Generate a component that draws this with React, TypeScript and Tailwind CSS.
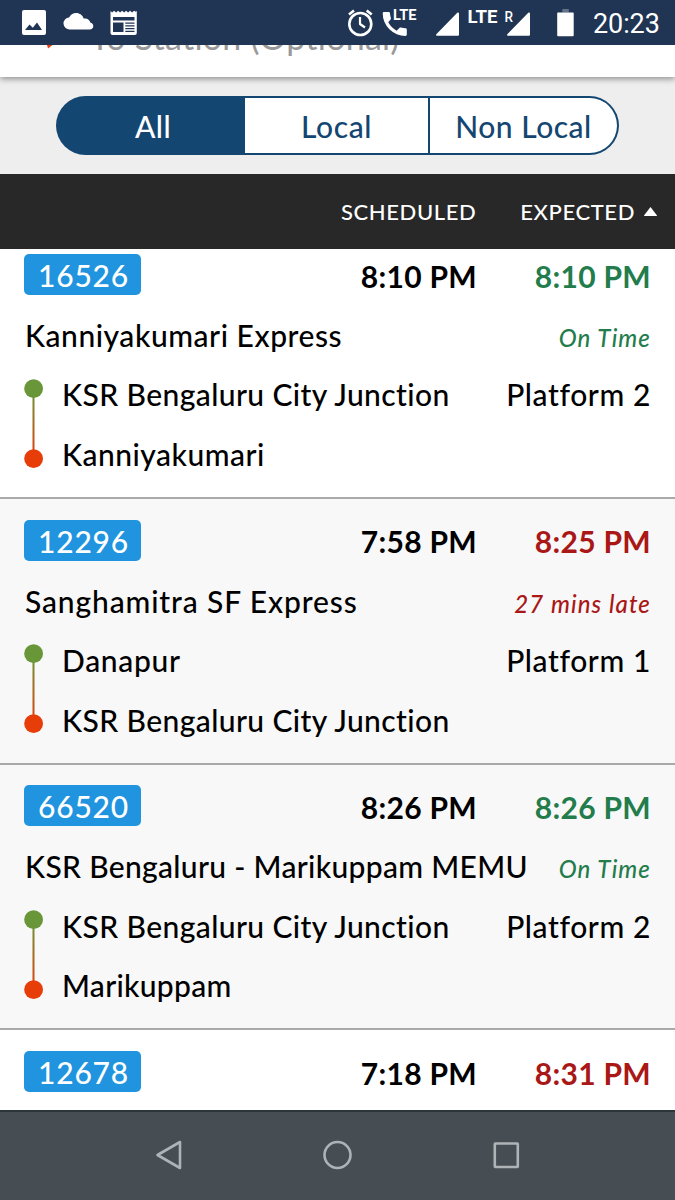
type Train = {
  number: string;
  name: string;
  nameTracking: string;
  scheduled: string;
  expected: string;
  status: string;
  late: boolean;
  from: string;
  fromTracking: string;
  to: string;
  toTracking: string;
  platform: string;
  shade: string;
};

const trains: Train[] = [
  {
    number: "16526",
    name: "Kanniyakumari Express",
    nameTracking: "tracking-[0.55px]",
    scheduled: "8:10 PM",
    expected: "8:10 PM",
    status: "On Time",
    late: false,
    from: "KSR Bengaluru City Junction",
    fromTracking: "tracking-[0.41px]",
    to: "Kanniyakumari",
    toTracking: "tracking-[0.5px]",
    platform: "Platform 2",
    shade: "bg-white",
  },
  {
    number: "12296",
    name: "Sanghamitra SF Express",
    nameTracking: "tracking-[0.87px]",
    scheduled: "7:58 PM",
    expected: "8:25 PM",
    status: "27 mins late",
    late: true,
    from: "Danapur",
    fromTracking: "tracking-[0.7px]",
    to: "KSR Bengaluru City Junction",
    toTracking: "tracking-[0.41px]",
    platform: "Platform 1",
    shade: "bg-[#f8f8f8]",
  },
  {
    number: "66520",
    name: "KSR Bengaluru - Marikuppam MEMU",
    nameTracking: "tracking-[0.32px]",
    scheduled: "8:26 PM",
    expected: "8:26 PM",
    status: "On Time",
    late: false,
    from: "KSR Bengaluru City Junction",
    fromTracking: "tracking-[0.41px]",
    to: "Marikuppam",
    toTracking: "tracking-[0.3px]",
    platform: "Platform 2",
    shade: "bg-[#f8f8f8]",
  },
  {
    number: "12678",
    name: "",
    nameTracking: "",
    scheduled: "7:18 PM",
    expected: "8:31 PM",
    status: "",
    late: true,
    from: "",
    fromTracking: "",
    to: "",
    toTracking: "",
    platform: "",
    shade: "bg-white",
  },
];

function StatusBar() {
  return (
    <div className="relative z-10 flex h-[45px] shrink-0 items-start bg-[#203453] font-['Roboto',sans-serif] text-white">
      <svg className="h-[45px] w-[150px]" viewBox="0 0 150 45" fill="currentColor">
        <path fillRule="evenodd" d="M24 10h20a2 2 0 0 1 2 2v21a2 2 0 0 1-2 2H24a2 2 0 0 1-2-2V12a2 2 0 0 1 2-2Zm1 20h17l-5-7.5-4.2 5.2-3.3-3.2Z" />
        <path d="M70 29.5a6 6 0 0 1-.9-12C70.200 14.800 73 13 76.200 13c3.600 0 6.600 2.400 7.500 5.600 3.300-.9 6 1.200 6.600 4 1.700.5 3 1.800 3 3.500 0 2-1.500 3.400-3.600 3.400Z" />
        <path fillRule="evenodd" d="M110.500 11l1.600 1.500 2-1.800 2 1.800 2-1.800 2 1.800 2-1.800 2 1.800 2-1.800 2 1.800 2-1.800 2 1.800 2-1.800 1.600 1 1.100-.7V33a2 2 0 0 1-2 2h-22.300a2 2 0 0 1-2-2Zm2.500 6v3.600h21.500V17Zm0 5.600V32h10.500v-9.400Zm12.300 0v1.200h9.200v-1.200Zm0 2.700v1.200h9.200v-1.200Zm0 2.700v1.200h9.200V28Zm0 2.700V32h9.200v-1.300Z" />
      </svg>
      <svg className="ml-auto h-[45px] w-[245px]" viewBox="340 0 245 45" fill="currentColor">
        <g fill="none" stroke="currentColor" strokeLinejoin="round">
          <circle cx="360.300" cy="24" r="11" strokeWidth="2.600" />
          <path d="M360 17v7l5 3.500" strokeWidth="2.200" />
          <path d="M349 14.500l5-4M371.700 14.500l-5-4" strokeWidth="2.600" />
        </g>
        <path d="M384 12h4.700a1.300 1.300 0 0 1 1.300 1.200c.1 1.700.4 3.300.9 4.800.1.500 0 1-.3 1.400l-2.300 2.900a20 20 0 0 0 8.400 8.400l2.900-2.900c.4-.4.900-.5 1.400-.3 1.500.5 3.100.8 4.600.8.700 0 1.200.6 1.200 1.300v5a1.300 1.300 0 0 1-1.300 1.300A22.700 22.700 0 0 1 382.700 13.300 1.300 1.300 0 0 1 384 12Z" />
        <text x="393" y="20" fontSize="14" fontWeight="700" textLength="23.500" lengthAdjust="spacingAndGlyphs">LTE</text>
        <path d="M457.500 12.500a1.300 1.300 0 0 1 1.500 1.300v21a1 1 0 0 1-1 1h-21a1 1 0 0 1-.7-1.600Z" />
        <text x="467.500" y="23" fontSize="18" fontWeight="700" textLength="30" lengthAdjust="spacingAndGlyphs">LTE</text>
        <text x="504.500" y="22.300" fontSize="14" fontWeight="500" textLength="8.500" lengthAdjust="spacingAndGlyphs">R</text>
        <path d="M528.500 12.500a1.300 1.300 0 0 1 1.500 1.300v21a1 1 0 0 1-1 1h-21a1 1 0 0 1-.7-1.600Z" />
        <path d="M562.300 9h6.500v3.500h-6.500z" fill="#66748a" />
        <path d="M558 12.500h15a.7.7 0 0 1 .7.700v22a1 1 0 0 1-1 1h-14.500a1 1 0 0 1-1-1v-22a.7.7 0 0 1 .8-.7z" />
      </svg>
      <span className="w-[90px] pl-[8px] pt-[6px] text-[27px] leading-[36px] tracking-[-0.1px]">20:23</span>
    </div>
  );
}

function TrainCard({ train }: { train: Train }) {
  const tone = train.late ? "text-[#a91717]" : "text-[#227c4b]";
  return (
    <article className={`h-[265.67px] shrink-0 border-b-2 border-[#a9a9a9] pl-6 pr-6 pt-[13px] ${train.shade}`}>
      <div className="flex h-[59.5px] items-center text-[30px] font-bold tracking-[0.3px]">
        <span className="mb-[3px] flex h-[41px] w-[117px] items-center justify-center rounded-[5px] bg-[#2094de] pl-[2px] pt-[2px] font-medium tracking-[0.8px] text-white">
          {train.number}
        </span>
        <span className="ml-auto">{train.scheduled}</span>
        <span className={`w-[174px] text-right ${tone}`}>{train.expected}</span>
      </div>
      {train.name && (
        <div className="flex h-[59.5px] items-baseline justify-between whitespace-nowrap pl-px text-[30px] font-medium leading-[59.5px]">
          <span className={train.nameTracking}>{train.name}</span>
          <span className={`text-2xl italic leading-none tracking-[1.1px] ${tone}`}>{train.status}</span>
        </div>
      )}
      {train.from && (
        <div className="flex text-[30px] font-medium leading-[59.5px]">
          <svg className="mt-[13.3px] h-[90px] w-[19px] shrink-0" viewBox="0 0 19 90">
            <defs>
              <linearGradient id={`route-${train.number}`} x1="0" y1="0" x2="0" y2="1">
                <stop offset="0" stopColor="#689638" />
                <stop offset="1" stopColor="#e63d09" />
              </linearGradient>
            </defs>
            <rect x="8.500" y="10" width="2" height="70" fill={`url(#route-${train.number})`} />
            <circle cx="9.600" cy="9.700" r="9.400" fill="#689638" />
            <circle cx="9.600" cy="79.700" r="9.400" fill="#e63d09" />
          </svg>
          <div className="ml-[19px] flex flex-col">
            <span className={train.fromTracking}>{train.from}</span>
            <span className={train.toTracking}>{train.to}</span>
          </div>
          <span className="ml-auto tracking-[0.6px]">{train.platform}</span>
        </div>
      )}
    </article>
  );
}

export default function App() {
  return (
    <div className="flex h-[1200px] w-[675px] flex-col overflow-hidden bg-white font-['Lato',sans-serif] text-black">
      <StatusBar />
      <div className="relative z-[5] flex h-8 shrink-0 items-start bg-white shadow-[0_2px_6px_rgba(0,0,0,0.4)]">
        <svg className="ml-[47px] h-[4px] w-[6px]" viewBox="0 0 6 4">
          <path d="M0 0h5.500L1 3.500Z" fill="#e63d09" />
        </svg>
        <div className="ml-[37px] flex h-8 items-start overflow-hidden">
          <span className="-mt-[28px] whitespace-nowrap text-[34px] leading-[40px] tracking-[0.25px] text-[#999]">
            To Station (Optional)
          </span>
        </div>
      </div>
      <div className="flex h-[97px] shrink-0 items-start bg-[#eee] pl-14 pt-[18.5px]">
        <div className="flex h-[59px] w-[563px] gap-[2px] overflow-hidden rounded-full bg-[#144672] p-[2px] text-[30px] font-medium leading-[56px] text-[#144672]">
          <button className="w-[186px] pl-1 tracking-[0.4px] text-white">All</button>
          <button className="w-[183px] -ml-px bg-white tracking-[0.6px]">Local</button>
          <button className="flex-1 rounded-r-full bg-white tracking-[0.5px]">Non Local</button>
        </div>
      </div>
      <div className="flex h-[75px] shrink-0 items-center bg-[#282828] text-[22px] font-medium tracking-[0.6px] text-white">
        <span className="ml-[341px]">SCHEDULED</span>
        <span className="ml-auto">EXPECTED</span>
        <svg className="ml-[9px] mr-[18px] h-[9px] w-[13px]" viewBox="0 0 13 9" fill="currentColor">
          <path d="M6.500 0 13 8.500a.4.4 0 0 1-.4.5H.4a.4.4 0 0 1-.4-.5Z" />
        </svg>
      </div>
      <main className="flex min-h-0 flex-1 flex-col overflow-hidden">
        <div className="-mt-[15.67px] flex flex-col">
          {trains.map((train) => (
            <TrainCard key={train.number} train={train} />
          ))}
        </div>
      </main>
      <nav className="flex h-[90px] shrink-0 items-center justify-center border-t-2 border-[#2c353a] bg-[#464d53]">
        <svg className="h-[88px] w-[675px]" viewBox="0 0 675 88" fill="none" stroke="#adb3b6" strokeWidth="2.600" strokeLinejoin="round">
          <path d="M157.500 43 180 30v26Z" />
          <circle cx="337.500" cy="43" r="13" />
          <rect x="494.800" y="31.500" width="23" height="23.500" rx="0.500" />
        </svg>
      </nav>
    </div>
  );
}
